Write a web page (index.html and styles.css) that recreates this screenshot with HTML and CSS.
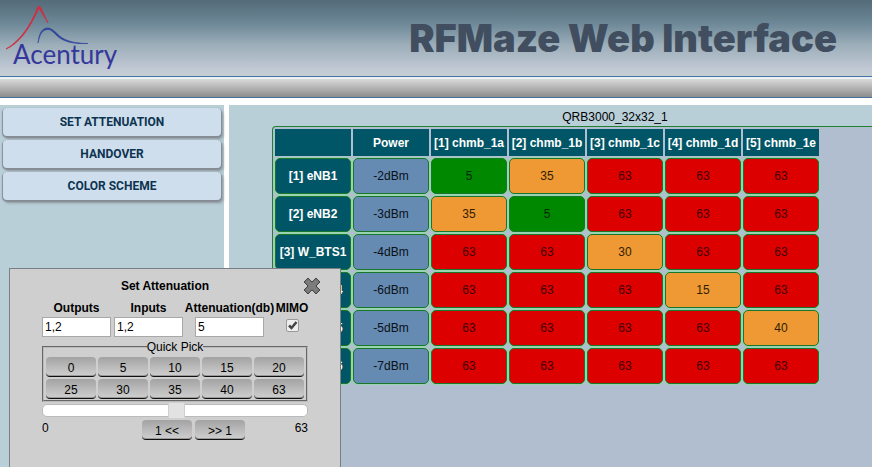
FILE: index.html
```html
<!DOCTYPE html>
<html lang="en">
<head>
<meta charset="utf-8">
<title>RFMaze Web Interface</title>
<link rel="stylesheet" href="styles.css">
</head>
<body>
<header class="banner">
  <svg class="logo" width="126" height="74" viewBox="0 0 126 74" role="img" aria-label="Acentury">
    <path class="logo-red" d="M6 49C20 41 31 25 37.500 7.500Q39 4.500 41 8L48 23Q42 13 39.500 9Q38.500 8 37 12C29 30 18 44 6 49Z"/>
    <path class="logo-blue" d="M38 43C39 32 43 27 49 28C59 31 57 43 88 43.500C57 45 57 32 49 29.500C43 29 40 33 38 43Z"/>
    <text class="logo-text" x="13" y="64">Acentury</text>
  </svg>
  <h1 class="banner-title">RFMaze Web Interface</h1>
</header>
<div class="strip"></div>
<main class="content">
  <nav class="sidebar">
    <button class="nav-button" type="button">SET ATTENUATION</button>
    <button class="nav-button" type="button">HANDOVER</button>
    <button class="nav-button" type="button">COLOR SCHEME</button>
  </nav>
  <section class="matrix">
    <div class="matrix-inner">
      <h2 class="matrix-title">QRB3000_32x32_1</h2>
      <div class="matrix-frame">
        <table class="grid">
          <thead>
            <tr><td></td><th>Power</th><th>[1] chmb_1a</th><th>[2] chmb_1b</th><th>[3] chmb_1c</th><th>[4] chmb_1d</th><th>[5] chmb_1e</th></tr>
          </thead>
          <tbody>
            <tr><th>[1] eNB1</th><td class="power">-2dBm</td><td class="low">5</td><td class="mid">35</td><td>63</td><td>63</td><td>63</td></tr>
            <tr><th>[2] eNB2</th><td class="power">-3dBm</td><td class="mid">35</td><td class="low">5</td><td>63</td><td>63</td><td>63</td></tr>
            <tr><th>[3] W_BTS1</th><td class="power">-4dBm</td><td>63</td><td>63</td><td class="mid">30</td><td>63</td><td>63</td></tr>
            <tr><th>[4] W_BS4</th><td class="power">-6dBm</td><td>63</td><td>63</td><td>63</td><td class="mid">15</td><td>63</td></tr>
            <tr><th>[5] W_BS5</th><td class="power">-5dBm</td><td>63</td><td>63</td><td>63</td><td>63</td><td class="mid">40</td></tr>
            <tr><th>[6] W_BS6</th><td class="power">-7dBm</td><td>63</td><td>63</td><td>63</td><td>63</td><td>63</td></tr>
          </tbody>
        </table>
      </div>
    </div>
  </section>
</main>
<form class="dialog" role="dialog" aria-labelledby="dialog-title">
  <h2 class="dialog-title" id="dialog-title">Set Attenuation</h2>
  <button class="close" type="button" aria-label="Close">
    <svg width="18" height="18" viewBox="0 0 18 18"><path d="M5 1L9 5L13 1L17 5L13 9L17 13L13 17L9 13L5 17L1 13L5 9L1 5Z" fill="#777" stroke="#444" stroke-linejoin="round"/><path d="M4.500 4.500L13.500 13.500M13.500 4.500L4.500 13.500" stroke="#7d7d7d" stroke-width="3"/></svg>
  </button>
  <div class="fields">
    <div class="field"><label for="outputs">Outputs</label><input class="text" id="outputs" type="text" value="1,2"></div>
    <div class="field"><label for="inputs">Inputs</label><input class="text" id="inputs" type="text" value="1,2"></div>
    <div class="field field-wide"><label for="attenuation">Attenuation(db)</label><input class="text" id="attenuation" type="text" value="5"></div>
    <div class="field field-check"><label for="mimo">MIMO</label>
      <span class="check-wrap"><input class="check" id="mimo" type="checkbox" checked><svg class="tick" width="13" height="13" viewBox="0 0 13 13"><path d="M3 6.500L5.500 9L10.500 3" fill="none" stroke="#444" stroke-width="2.500"/></svg></span>
    </div>
  </div>
  <fieldset class="picks">
    <legend>Quick Pick</legend>
    <div class="pick-grid">
      <button class="key" type="button">0</button><button class="key" type="button">5</button><button class="key" type="button">10</button><button class="key" type="button">15</button><button class="key" type="button">20</button>
      <button class="key" type="button">25</button><button class="key" type="button">30</button><button class="key" type="button">35</button><button class="key" type="button">40</button><button class="key" type="button">63</button>
    </div>
  </fieldset>
  <input class="slider" type="range" min="0" max="63" value="32" aria-label="Attenuation">
  <div class="range-row">
    <span class="bound">0</span>
    <div class="steps"><button class="key" type="button">1 &lt;&lt;</button><button class="key" type="button">&gt;&gt; 1</button></div>
    <span class="bound bound-max">63</span>
  </div>
</form>
</body>
</html>
```
FILE: styles.css
```css
* { box-sizing: border-box; }

body {
  display: flex;
  flex-direction: column;
  height: 100vh;
  margin: 0;
  overflow: hidden;
  background: #fff;
  color: #000;
  font: 12px/16px "Liberation Sans", Arial, sans-serif;
}

h1, h2 { margin: 0; }
button, input { font: inherit; color: inherit; }

.banner {
  display: flex;
  justify-content: space-between;
  align-items: flex-start;
  flex: none;
  height: 77px;
  padding-right: 35px;
  border-bottom: 1px solid #4672aa;
  background: linear-gradient(#546b78, #6c8797 30%, #9dafba 60%, #c0c8d4 90%, #c5cfd2);
}
.logo { flex: none; }
.logo-red { fill: #cf2d43; stroke: #cf2d43; stroke-width: 0.8; }
.logo-blue { fill: #30439b; stroke: #30439b; stroke-width: 0.6; }
.logo-text { fill: #35379b; font: 26px Lato, sans-serif; }
.banner-title {
  padding-top: 16px;
  color: #414e60;
  font: 900 38px/44px Inter, "Arial Black", sans-serif;
  white-space: nowrap;
}

.strip {
  flex: none;
  height: 21px;
  border-bottom: 1px solid #4672a0;
  border-top: 2px solid #eaf2f4;
  background: linear-gradient(#dadada, #8c8c8c);
}

.content {
  display: flex;
  flex: 1;
  gap: 5px;
  min-height: 0;
  margin-top: 7px;
}
.sidebar {
  display: flex;
  flex: none;
  flex-direction: column;
  gap: 4px;
  width: 224px;
  padding: 3px 3px 0;
  background: #b9cfd8;
}
.nav-button {
  height: 28px;
  padding: 1px 0 0;
  border: 0;
  border-radius: 4px;
  background: #cfdeed;
  box-shadow: 0 1px 1px 1px #858c94, 2px 3px 3px #8e969c;
  color: #0c3450;
  font: 700 12px/27px Roboto, sans-serif;
}

.matrix {
  display: flex;
  flex: 1;
  min-width: 0;
  padding-left: 43px;
  overflow: hidden;
  background: #b9cfd8;
}
.matrix-inner {
  display: flex;
  flex: none;
  flex-direction: column;
  width: 686px;
}
.matrix-title {
  padding: 4px 0 1px;
  font-weight: 400;
  font-size: 12px;
  text-align: center;
}
.matrix-frame {
  flex: 1;
  border: 1px solid #208030;
  border-bottom: 0;
  border-radius: 4px 4px 0 0;
  background: #b0bed0;
}
.grid {
  table-layout: fixed;
  width: 548px;
  border-spacing: 2px;
}
.grid th, .grid td { padding: 0; text-align: center; white-space: nowrap; }
.grid thead th, .grid thead td { height: 27px; background: #005566; color: #fff; }
.grid tbody th, .grid tbody td {
  height: 36px;
  border: 1px solid #17772a;
  border-radius: 5px;
  box-shadow: 0 0 0 1px #99d3b0;
  background: #dc0000;
}
.grid tbody td { color: #400000; }
.grid tbody th { background: #005566; color: #fff; }
.grid tbody .power { background: #668bb2; color: #0a1018; }
.grid tbody .low { background: #008800; color: #002800; }
.grid tbody .mid { background: #ee9933; color: #321c00; }

/* Floating settings panel */
.dialog {
  position: absolute;
  top: 268px;
  left: 9px;
  width: 332px;
  padding: 9px 32px 40px;
  border: 1px solid #788086;
  background: #cfcfcf;
}
.dialog-title {
  padding-right: 20px;
  font-size: 12px;
  text-align: center;
}
.close {
  position: absolute;
  top: 8px;
  right: 19px;
  width: 18px;
  height: 18px;
  padding: 0;
  border: 0;
  background: none;
}
.close svg { display: block; }
.fields { display: flex; gap: 3px; margin-top: 6px; }
.field {
  display: flex;
  flex-direction: column;
  align-items: center;
  gap: 1px;
  width: 69px;
  font-weight: 700;
}
.field-wide { width: 87px; }
.field-check { width: 32px; }
.text {
  width: 69px;
  height: 20px;
  padding: 1px 2px;
  border: 1px solid #a8a8a8;
  background: #fff;
  font-weight: 400;
}
.check-wrap { display: grid; margin-top: 2px; }
.check, .tick { grid-area: 1 / 1; }
.check {
  appearance: none;
  width: 13px;
  height: 13px;
  margin: 0;
  border: 1px solid #999;
  border-radius: 2px;
  background: #eee;
}
.tick { pointer-events: none; }

.picks {
  margin: 2px 0 0;
  padding: 2px 2px 1px;
  border: 2px groove #bbb;
}
.picks legend { height: 16px; margin: 0 auto; padding: 0; }
.pick-grid { display: grid; grid-template-columns: repeat(5, 1fr); gap: 2px; }
.key {
  height: 20px;
  padding: 2px 0 0;
  border: 0;
  border-bottom: 1px solid #111;
  border-radius: 4px;
  background: linear-gradient(#a3a3a3, #cfcfcf);
  box-shadow: inset 0 -1px 0 #999;
  line-height: 16px;
}
.slider {
  display: block;
  appearance: none;
  width: 100%;
  height: 17px;
  margin: 0;
  background: none;
}
.slider::-webkit-slider-runnable-track {
  height: 13px;
  border: 1px solid #bbb;
  border-radius: 5px;
  background: #fff;
}
.slider::-webkit-slider-thumb {
  appearance: none;
  width: 17px;
  height: 17px;
  margin-top: -3px;
  border: 1px solid #d0d0d0;
  border-radius: 2px;
  background: #e2e2e2;
}
.range-row { display: flex; justify-content: space-between; margin-top: 1px; }
.bound { width: 30px; }
.bound-max { text-align: right; }
.steps { display: flex; gap: 3px; padding-left: 37px; flex: 1; justify-content: center; }
.steps .key { width: 50px; }
```
